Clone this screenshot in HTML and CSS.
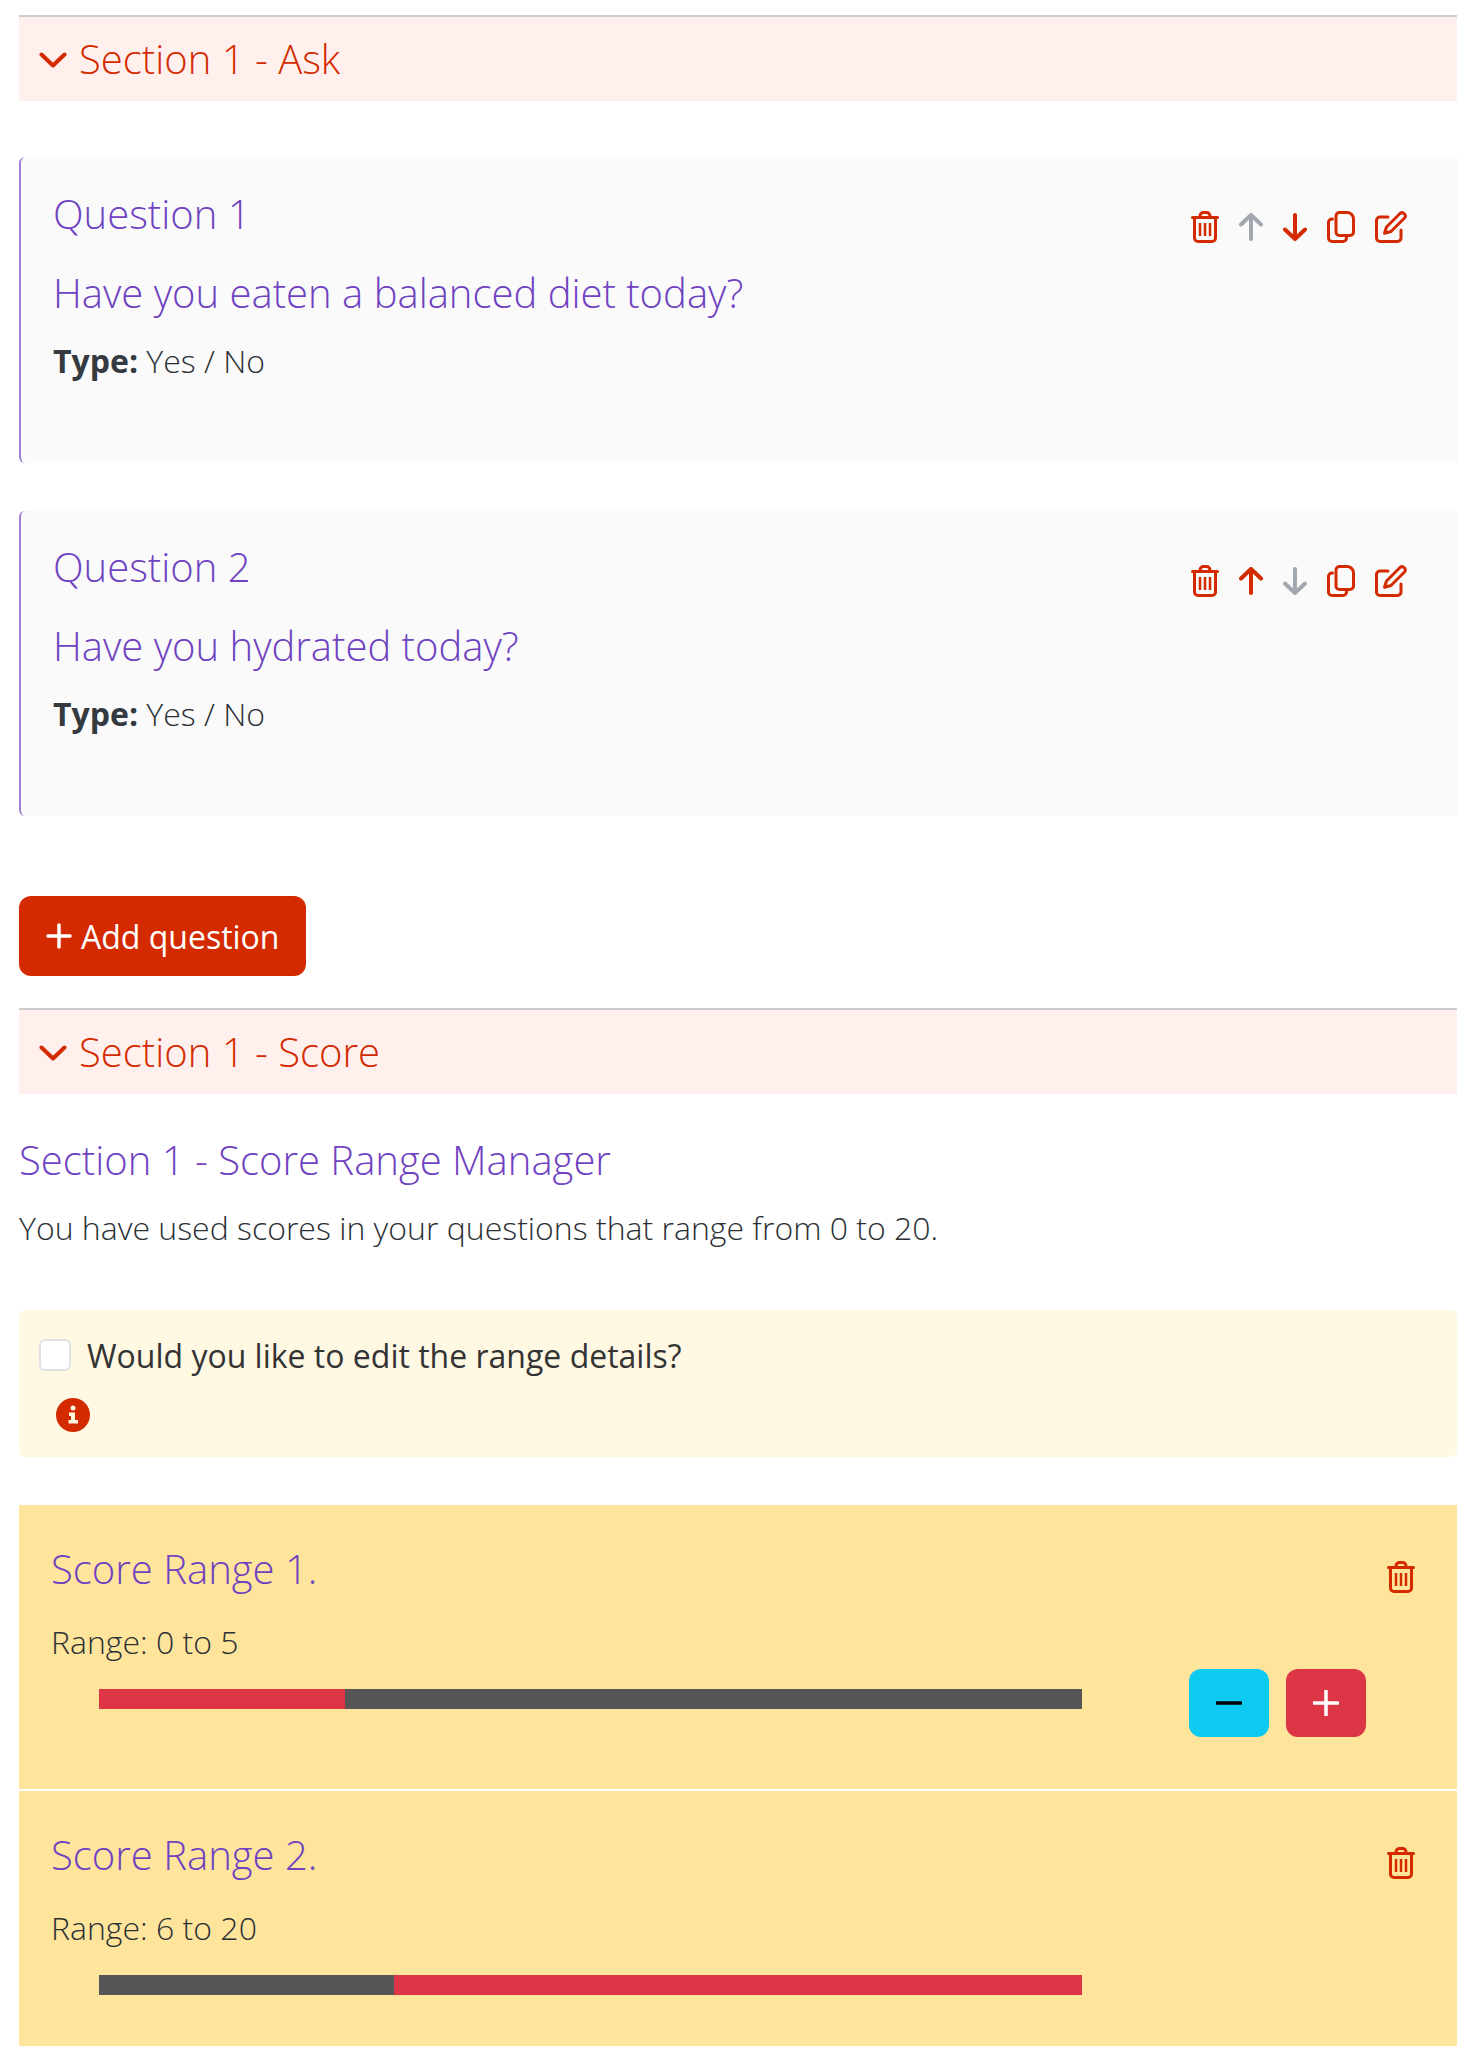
FILE: index.html
```html
<!DOCTYPE html>
<html lang="en">
<head>
    <meta charset="UTF-8">
    <meta name="viewport" content="width=device-width, initial-scale=1.0">
    <title>Section 1</title>
    <link rel="stylesheet" href="styles.css">
</head>
<body>
    <svg class="icon-defs" width="0" height="0">
        <symbol id="i-trash" viewBox="0 0 28 32">
            <path d="M1.500 6.500h25M9 6.500V5a3.500 3.500 0 0 1 3.500-3.500h3A3.500 3.500 0 0 1 19 5v1.500M3.500 6.500V27a3.500 3.500 0 0 0 3.500 3.500h14a3.500 3.500 0 0 0 3.500-3.500V6.500" />
            <path class="thin" d="M9 12v13M14 12v13M19 12v13" />
        </symbol>
        <symbol id="i-up" viewBox="0 0 24 28">
            <path class="thick" d="M12 26V2.500M2 11.500L12 2l10 9.500" />
        </symbol>
        <symbol id="i-down" viewBox="0 0 24 28">
            <path class="thick" d="M12 2v23.500M2 16.500L12 26l10-9.500" />
        </symbol>
        <symbol id="i-copy" viewBox="0 0 28 32">
            <path d="M9 5a3.500 3.500 0 0 1 3.500-3.500H20a6.500 6.500 0 0 1 6.500 6.500v13a3.500 3.500 0 0 1-3.500 3.500H12.500A3.500 3.500 0 0 1 9 21z" />
            <path d="M5.500 8H5a3.500 3.500 0 0 0-3.500 3.500V27A3.500 3.500 0 0 0 5 30.500h11a3.500 3.500 0 0 0 3.500-3.500v-.5" />
        </symbol>
        <symbol id="i-edit" viewBox="0 0 32 32">
            <path d="M13 6H5a3.500 3.500 0 0 0-3.500 3.500V27A3.500 3.500 0 0 0 5 30.500h17.500A3.500 3.500 0 0 0 26 27v-8" />
            <path d="M25 2.500a3.200 3.200 0 0 1 4.500 4.500L16 20.500l-6.500 1.800L11.500 16z" />
        </symbol>
        <symbol id="i-chevron" viewBox="0 0 28 16">
            <path class="thick" d="M2.500 2.500L14 13.500 25.500 2.500" />
        </symbol>
    </svg>

    <div class="section-bar">
        <svg class="chevron"><use href="#i-chevron" /></svg>
        <span>Section 1 - Ask</span>
    </div>

    <div class="question-list">
        <div class="question-card">
            <div class="question-text">
                <h4>Question 1</h4>
                <h4 class="prompt">Have you eaten a balanced diet today?</h4>
                <p><strong>Type:</strong> Yes / No</p>
            </div>
            <div class="question-actions">
                <svg class="ico w28"><use href="#i-trash" /></svg>
                <svg class="ico w24 off"><use href="#i-up" /></svg>
                <svg class="ico w24"><use href="#i-down" /></svg>
                <svg class="ico w28"><use href="#i-copy" /></svg>
                <svg class="ico w32"><use href="#i-edit" /></svg>
            </div>
        </div>
        <div class="question-card">
            <div class="question-text">
                <h4>Question 2</h4>
                <h4 class="prompt">Have you hydrated today?</h4>
                <p><strong>Type:</strong> Yes / No</p>
            </div>
            <div class="question-actions">
                <svg class="ico w28"><use href="#i-trash" /></svg>
                <svg class="ico w24"><use href="#i-up" /></svg>
                <svg class="ico w24 off"><use href="#i-down" /></svg>
                <svg class="ico w28"><use href="#i-copy" /></svg>
                <svg class="ico w32"><use href="#i-edit" /></svg>
            </div>
        </div>
    </div>

    <button class="add-btn">
        <svg class="add-plus" viewBox="0 0 26 26"><path d="M13 2v22M2 13h22" /></svg>
        Add question
    </button>

    <div class="section-bar">
        <svg class="chevron"><use href="#i-chevron" /></svg>
        <span>Section 1 - Score</span>
    </div>

    <h4 class="manager-title">Section 1 - Score Range Manager</h4>
    <p class="manager-note">You have used scores in your questions that range from 0 to 20.</p>

    <div class="edit-alert">
        <label class="edit-check">
            <input type="checkbox">
            <span>Would you like to edit the range details?</span>
        </label>
        <svg class="info" viewBox="0 0 34 34">
            <circle class="info-bg" cx="17" cy="17" r="17" />
            <circle class="info-fg" cx="17" cy="10" r="2.500" />
            <path class="info-fg" d="M13 14.500h6V22h3v3.500H12.500V22H15v-4h-2z" />
        </svg>
    </div>

    <div class="range-list">
        <div class="range-card first">
            <div class="range-head">
                <h4>Score Range 1.</h4>
                <svg class="ico w28"><use href="#i-trash" /></svg>
            </div>
            <p>Range: 0 to 5</p>
            <div class="range-row">
                <div class="range-bar">
                    <div class="seg on" style="width: 25%"></div>
                    <div class="seg" style="width: 75%"></div>
                </div>
                <div class="range-btns">
                    <button class="step minus"><svg viewBox="0 0 26 26"><path d="M1 13h24" /></svg></button>
                    <button class="step plus"><svg viewBox="0 0 26 26"><path d="M13 1v24M1 13h24" /></svg></button>
                </div>
            </div>
        </div>
        <div class="range-card">
            <div class="range-head">
                <h4>Score Range 2.</h4>
                <svg class="ico w28"><use href="#i-trash" /></svg>
            </div>
            <p>Range: 6 to 20</p>
            <div class="range-row">
                <div class="range-bar">
                    <div class="seg" style="width: 30%"></div>
                    <div class="seg on" style="width: 70%"></div>
                </div>
            </div>
        </div>
    </div>
</body>
</html>
```

FILE: styles.css
```css
* {
    margin: 0;
    padding: 0;
    box-sizing: border-box;
}

body {
    font-family: "Open Sans", sans-serif;
    font-size: 32px;
    font-weight: 300;
    line-height: 42px;
    color: #2b3035;
    background: white;
    padding: 15px 23px 18px 19px;
}

.icon-defs {
    position: absolute;
}

symbol path {
    fill: none;
    stroke: currentColor;
    stroke-width: 3;
    stroke-linecap: round;
    stroke-linejoin: round;
}

symbol path.thin {
    stroke-width: 2.500;
    stroke-linecap: butt;
}

symbol path.thick {
    stroke-width: 4;
}

h4 {
    font-size: 40px;
    font-weight: 300;
    line-height: 44px;
    color: #6f42c1;
}

.section-bar {
    display: flex;
    align-items: center;
    gap: 12px;
    height: 86px;
    padding-left: 20px;
    border-top: 2px solid #ccc;
    background: #fff0ed;
    color: #d42a00;
    font-size: 40px;
}

.chevron {
    width: 28px;
    height: 16px;
    margin-top: 2px;
    color: #d42a00;
}

.question-list {
    display: flex;
    flex-direction: column;
    gap: 48px;
    margin-top: 56px;
}

.question-card {
    display: flex;
    justify-content: space-between;
    height: 305.500px;
    padding: 34.500px 50px 0 32px;
    background: #fafafa;
    border-left: 2px solid #9b80d6;
    border-radius: 6px 0 0 6px;
}

.question-text .prompt {
    margin-top: 35px;
}

.question-text p {
    margin-top: 25px;
}

.question-text strong {
    font-weight: 700;
    color: #343a40;
}

.question-actions {
    display: flex;
    align-items: flex-start;
    gap: 20px;
    padding-top: 19.500px;
    color: #d42a00;
}

.ico {
    height: 32px;
    color: #d42a00;
    flex: none;
}

.ico.w24 {
    width: 24px;
    height: 28px;
    margin-top: 2px;
}

.ico.w28 {
    width: 28px;
}

.ico.w32 {
    width: 32px;
}

.ico.off {
    color: #a2a8b0;
}

.add-btn {
    display: flex;
    align-items: center;
    gap: 9px;
    width: 287px;
    height: 80px;
    margin: 80px 0 32px;
    padding-left: 27px;
    border: none;
    border-radius: 12px;
    background: #d42a00;
    color: white;
    font-family: inherit;
    font-size: 32px;
    font-weight: 400;
}

.add-plus {
    width: 26px;
    height: 26px;
}

.add-plus path {
    fill: none;
    stroke: white;
    stroke-width: 3.500;
    stroke-linecap: round;
}

.manager-title {
    margin-top: 44px;
}

.manager-note {
    margin-top: 25px;
}

.edit-alert {
    margin-top: 61px;
    height: 147px;
    padding: 25px 20px 0;
    background: #fff8e3;
    border-radius: 6px;
}

.edit-check {
    display: flex;
    align-items: center;
    gap: 16px;
    height: 42px;
    font-weight: 400;
    color: #333;
}

.edit-check input {
    appearance: none;
    width: 32px;
    height: 32px;
    margin-bottom: 2px;
    background: white;
    border: 2px solid #dee2e6;
    border-radius: 6px;
}

.info {
    display: block;
    width: 34px;
    height: 34px;
    margin: 21px 0 0 17px;
}

.info-bg {
    fill: #d42a00;
}

.info-fg {
    fill: #fff8e3;
}

.range-list {
    margin-top: 48px;
    background: #ffe49c;
}

.range-card {
    height: 255px;
    padding: 20px 42px 0 32px;
}

.range-card.first {
    height: 286px;
    border-bottom: 2px solid white;
}

.range-head {
    display: flex;
    justify-content: space-between;
    align-items: flex-start;
    padding-top: 22px;
}

.range-head .ico {
    margin: 14px 0 0;
}

.range-card p {
    margin-top: 28px;
}

.range-row {
    display: flex;
    align-items: flex-start;
    margin: 26px 0 0 48px;
}

.range-bar {
    display: flex;
    width: 983px;
    height: 20px;
}

.seg {
    background: #555;
}

.seg.on {
    background: #dc3545;
}

.range-btns {
    display: flex;
    gap: 17px;
    margin: -20px 0 0 107px;
}

.step {
    display: flex;
    align-items: center;
    justify-content: center;
    width: 80px;
    height: 68px;
    border: none;
    border-radius: 12px;
}

.step svg {
    width: 26px;
    height: 26px;
}

.step path {
    fill: none;
    stroke-width: 3.500;
    stroke-linecap: round;
}

.step.minus {
    background: #0dcaf0;
}

.step.minus path {
    stroke: black;
}

.step.plus {
    background: #dc3545;
}

.step.plus path {
    stroke: white;
}
```
